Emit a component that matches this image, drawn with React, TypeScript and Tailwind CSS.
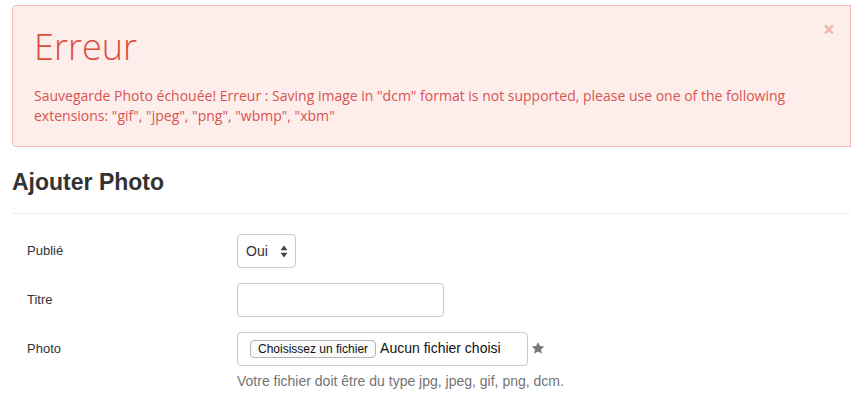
import React from "react";

const Star = () => (
  <svg width="14" height="14" viewBox="0 0 24 24" className="text-[#777]">
    <path
      fill="currentColor"
      d="M12 1.5l3.2 7.1 7.6.7-5.8 5.1 1.8 7.6L12 18.1 5.2 22l1.8-7.6L1.2 9.3l7.6-.7z"
    />
  </svg>
);

const Arrows = () => (
  <svg width="8" height="13" viewBox="0 0 8 13">
    <path d="M4 0.5L7.5 5.2H0.5z" fill="#444" />
    <path d="M4 12.5L7.5 7.8H0.5z" fill="#444" />
  </svg>
);

export default function App() {
  const sans = { fontFamily: '"Liberation Sans", Arial, Helvetica, sans-serif' };
  return (
    <div className="bg-white w-[851px] min-h-[399px] pl-[12px] pt-[5px]" style={sans}>
      <div
        className="relative border border-[#f4bcb3] bg-[#fdeeec] rounded-l-[4px] pl-[21px] pr-[30px] pt-[21px] pb-[20px] text-[#d9534f]"
        style={{ fontFamily: '"Open Sans", sans-serif' }}
      >
        <div className="absolute right-[15px] top-[13px] text-[21px] font-bold leading-[21px] text-[#f2b3aa]">
          ×
        </div>
        <h1 className="text-[36px] font-light leading-[40px] text-[#dc4f3c]">Erreur</h1>
        <p className="mt-[19px] text-[14px] leading-[20px] text-[#d9534f]">
          Sauvegarde Photo échouée! Erreur : Saving image in "dcm" format is not supported, please use one of the
          following extensions: "gif", "jpeg", "png", "wbmp", "xbm"
        </p>
      </div>

      <h2 className="mt-[20px] text-[23px] font-bold leading-[30px] text-[#333]">Ajouter Photo</h2>
      <div className="mt-[16px] border-t border-[#eeeeee]" />

      <div className="mt-[20px] flex flex-col gap-[15px] text-[13px] text-[#333]">
        <div className="flex items-center">
          <label className="w-[225px] pl-[15px]">Publié</label>
          <div className="flex h-[34px] w-[59px] items-center justify-between rounded-[4px] border border-[#c8c8c8] bg-white pl-[8px] pr-[7px] text-[14px] text-[#333]">
            <span>Oui</span>
            <Arrows />
          </div>
        </div>
        <div className="flex items-center">
          <label className="w-[225px] pl-[15px]">Titre</label>
          <div className="h-[34px] w-[207px] rounded-[4px] border border-[#c8c8c8] bg-white" />
        </div>
        <div className="flex items-start">
          <label className="w-[225px] pl-[15px] leading-[34px]">Photo</label>
          <div className="flex flex-col">
            <div className="flex items-center">
              <div className="flex h-[34px] w-[291px] items-center rounded-[4px] border border-[#c8c8c8] bg-white pl-[12px]">
                <span className="flex h-[18px] items-center rounded-[4px] border border-[#b5b5b5] bg-[#fafafa] px-[7px] text-[12px] leading-[16px] text-[#111]">
                  Choisissez un fichier
                </span>
                <span className="ml-[4px] -mt-[2px] text-[14px] text-[#111]">Aucun fichier choisi</span>
              </div>
              <span className="ml-[3px] -mt-[2px] flex">
                <Star />
              </span>
            </div>
            <p className="mt-[5px] text-[14px] leading-[20px] text-[#737373]">
              Votre fichier doit être du type jpg, jpeg, gif, png, dcm.
            </p>
          </div>
        </div>
      </div>
    </div>
  );
}
